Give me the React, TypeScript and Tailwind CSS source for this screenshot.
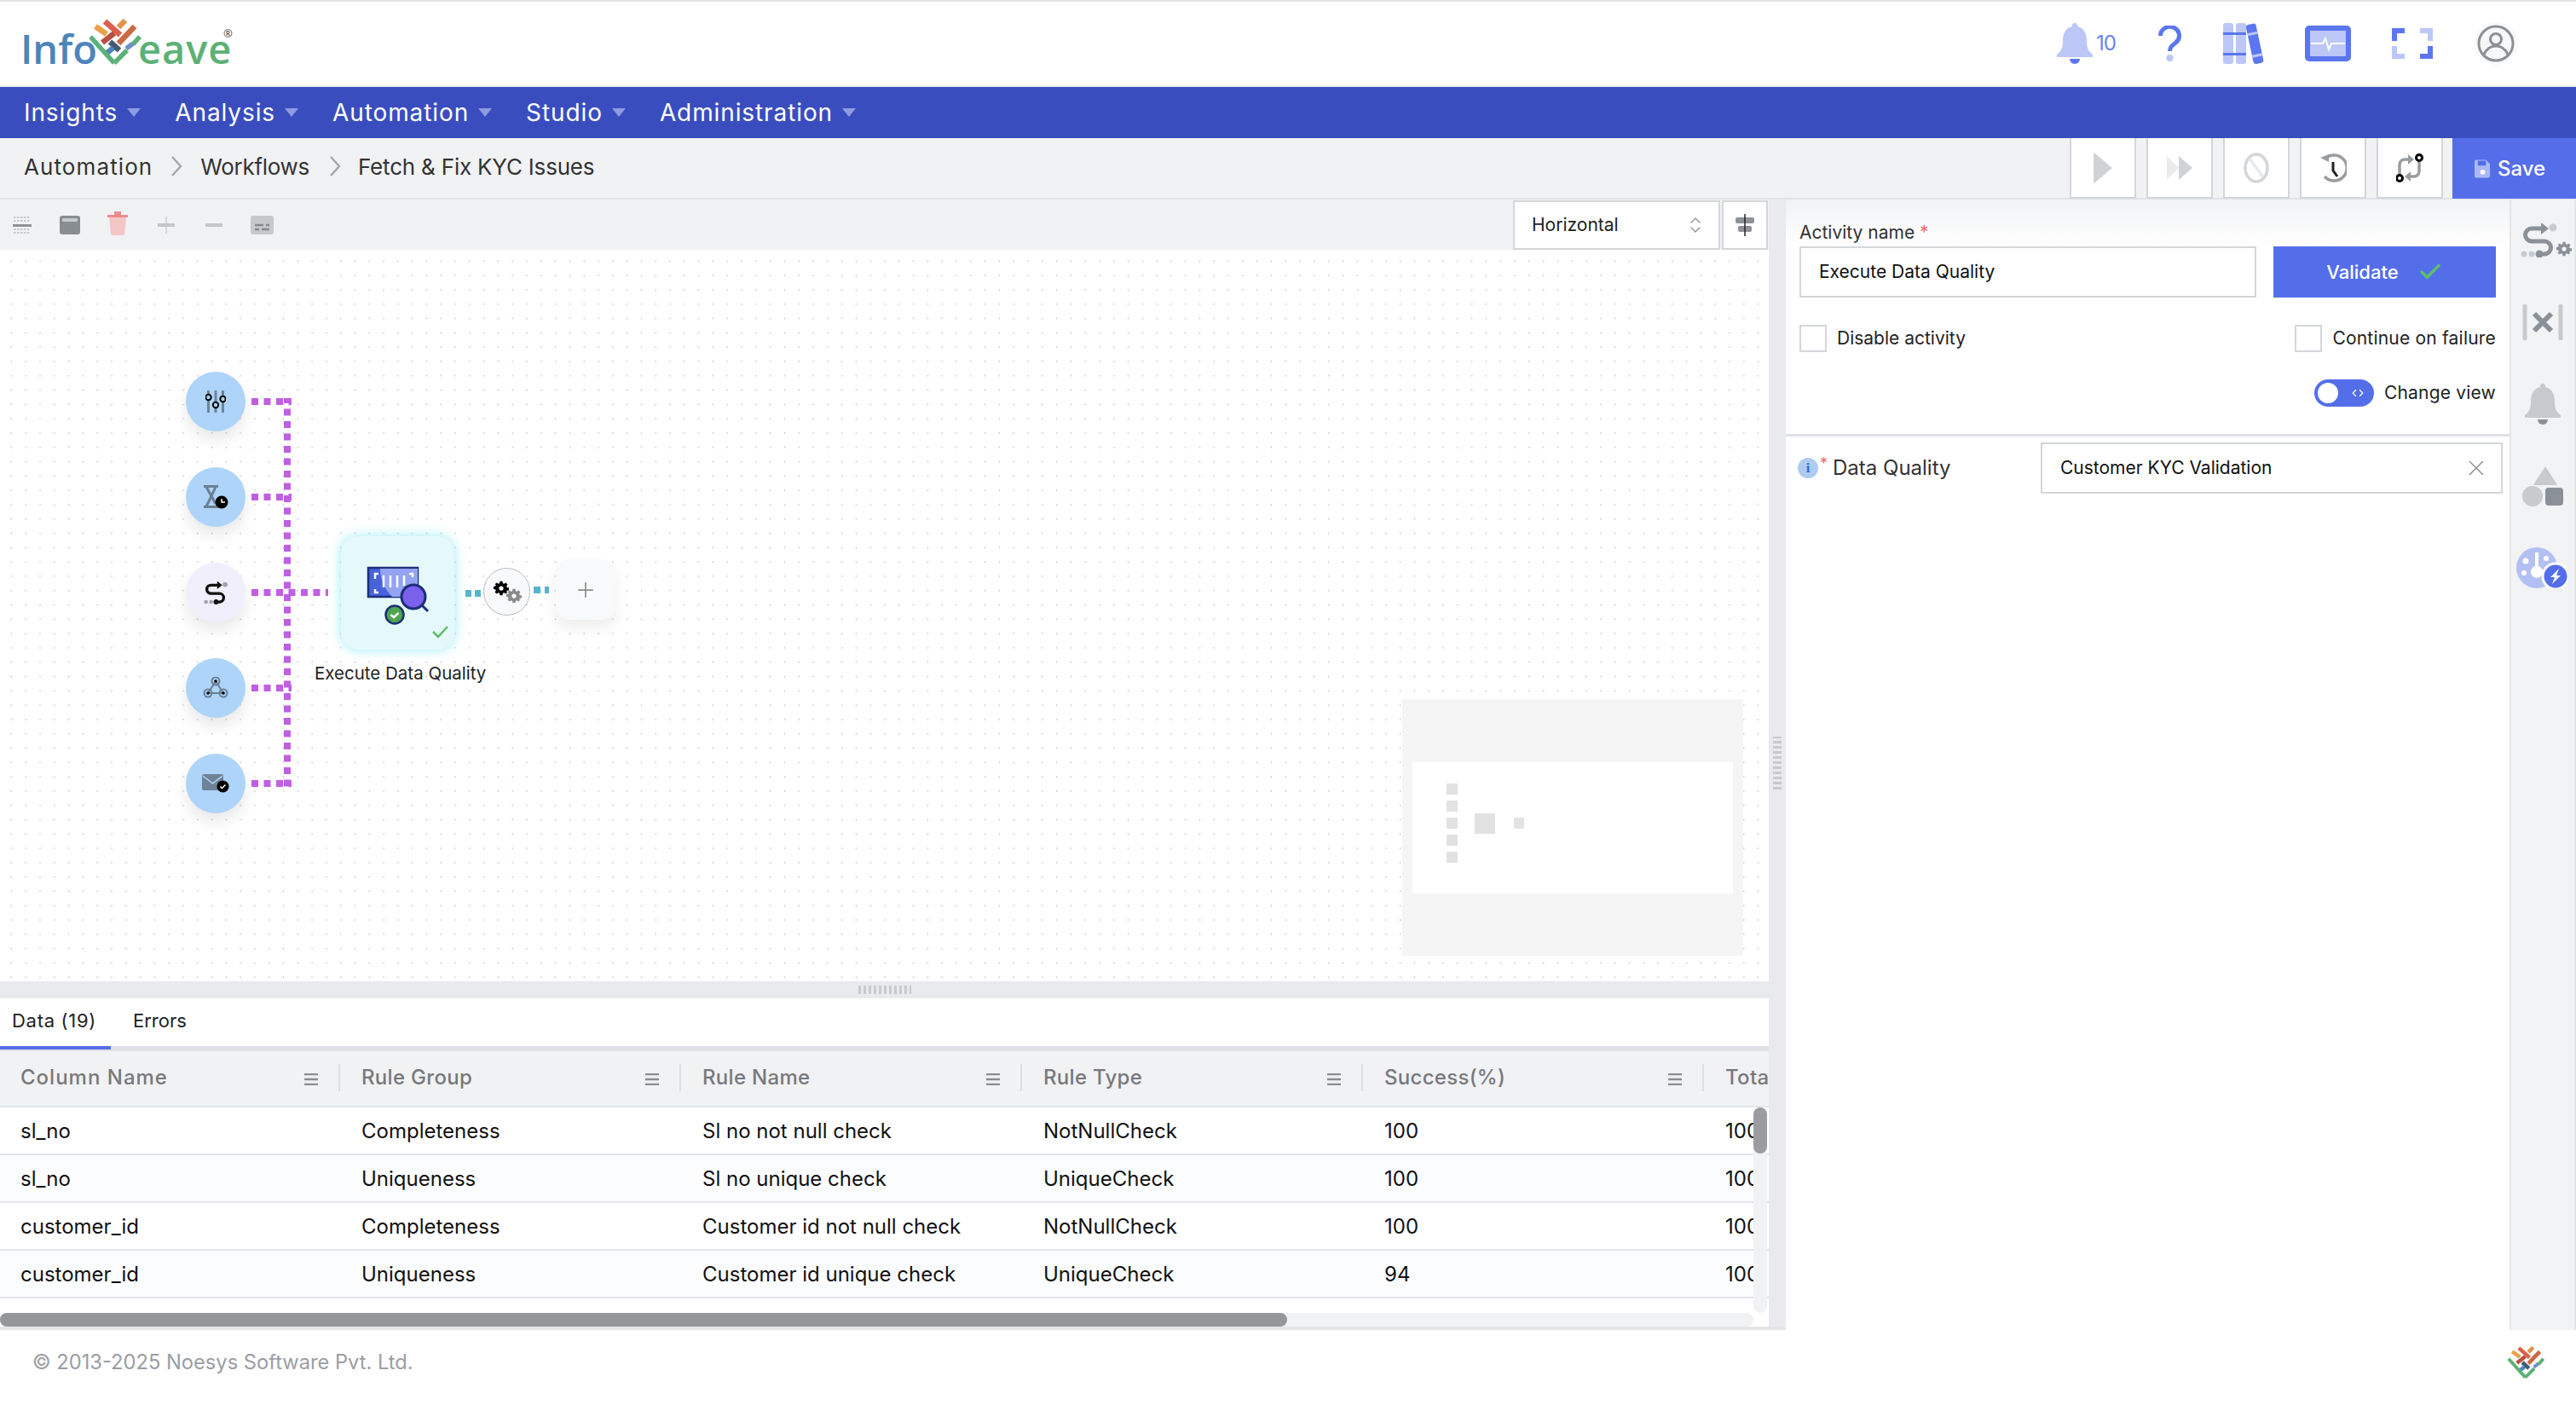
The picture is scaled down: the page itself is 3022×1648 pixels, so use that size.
import React from "react";
import { Plus, X, ChevronsUpDown, Code, Check } from "lucide-react";

const navItems = ["Insights", "Analysis", "Automation", "Studio", "Administration"];

const columns = ["Column Name", "Rule Group", "Rule Name", "Rule Type", "Success(%)", "Total"];

const rows = [
  ["sl_no", "Completeness", "Sl no not null check", "NotNullCheck", "100", "100"],
  ["sl_no", "Uniqueness", "Sl no unique check", "UniqueCheck", "100", "100"],
  ["customer_id", "Completeness", "Customer id not null check", "NotNullCheck", "100", "100"],
  ["customer_id", "Uniqueness", "Customer id unique check", "UniqueCheck", "94", "100"],
];

function WeaveMark({ className }: { className?: string }) {
  return (
    <svg viewBox="104 23 62 54" className={className}>
      <g fill="none" strokeWidth="6.5">
        <path d="M111 32L124 41" stroke="#e9a24a" />
        <path d="M122 26L140 42" stroke="#dc5f4d" />
        <path d="M138 33L146 25" stroke="#e0934a" />
        <path d="M138 52L157 32" stroke="#c96b42" />
        <path d="M119 51L133 40" stroke="#b9503f" />
        <path d="M128 50L139 60" stroke="#465a70" />
        <path d="M122 65L132 57" stroke="#4e86ba" />
        <path d="M147 58L155 52" stroke="#6f8ec9" strokeWidth="5.500" />
        <path d="M105 44L133 75" stroke="#5cb176" strokeWidth="5.500" />
        <path d="M133 75L148 60" stroke="#5cb176" strokeWidth="5.500" />
        <path d="M155 53L163 44" stroke="#5cb176" strokeWidth="5.500" />
      </g>
    </svg>
  );
}

function BellIcon({ body, clapper, className }: { body: string; clapper: string; className?: string }) {
  return (
    <svg viewBox="0 0 42 48" className={className}>
      <path
        d="M21 0a3 3 0 0 1 3 4c9 2 11 10 11 18 0 8 3 12 7 15a1.6 1.6 0 0 1-1 3H1a1.6 1.6 0 0 1-1-3c4-3 7-7 7-15 0-8 2-16 11-18a3 3 0 0 1 3-4z"
        fill={body}
      />
      <path d="M15 42h12a6 6 0 0 1-12 0z" fill={clapper} />
    </svg>
  );
}

function RouteIcon({ main, soft, className }: { main: string; soft: string; className?: string }) {
  return (
    <svg viewBox="0 0 44 40" className={className} fill="none">
      <path d="M26 6H13a7.500 7.500 0 0 0 0 15h15a7.500 7.500 0 0 1 0 15h-6" stroke={main} strokeWidth="5" />
      <path d="M24 -1l9 7-9 7z" fill={main} />
      <circle cx="22" cy="36" r="4.500" fill={main} />
      <circle cx="38" cy="5" r="4.500" fill={soft} />
      <circle cx="4" cy="36" r="3.500" fill={soft} />
      <circle cx="13" cy="36" r="3.500" fill={soft} />
    </svg>
  );
}

function GearIcon({ color, className }: { color: string; className?: string }) {
  return (
    <svg viewBox="0 0 24 24" className={className}>
      <path
        fill={color}
        fillRule="evenodd"
        d="M10 1h4l.6 3.2 1.9.8L19.2 3.2 22 6l-1.8 2.7.8 1.9 3 .6v4l-3 .6-.8 1.9L22 18l-2.8 2.8-2.7-1.8-1.9.8L14 23h-4l-.6-3.2-1.9-.8-2.7 1.8L2 18l1.8-2.2-.8-1.9-3-.6v-4l3-.6.8-1.9L2 6l2.8-2.8L7.500 5l1.9-.8zM12 8.500a3.500 3.500 0 1 0 0 7 3.500 3.500 0 0 0 0-7z"
      />
    </svg>
  );
}

function Crumb() {
  return (
    <svg viewBox="0 0 13 24" className="w-[13px] h-[24px] shrink-0" fill="none">
      <path d="M1 1l10 11L1 23" stroke="#a4a6a9" strokeWidth="2.400" />
    </svg>
  );
}

function ColumnMenu() {
  return (
    <svg viewBox="0 0 16 14" className="w-[16px] h-[14px] shrink-0 mt-[3px]">
      <path d="M0 1h16M0 7h16M0 13h16" stroke="#8a8d90" strokeWidth="2.400" />
    </svg>
  );
}

function TopIcons() {
  return (
    <div className="flex items-center ml-auto pr-[69px]">
      <BellIcon body="#bcc7f7" clapper="#5b76f0" className="w-[42px] h-[48px]" />
      <span className="ml-[4px] text-[24px] text-[#6a83f0] w-[22px] tracking-[-1px]">10</span>
      <svg viewBox="0 0 27 42" className="ml-[51px] w-[27px] h-[42px]" fill="none">
        <path d="M2.500 12a11 10.500 0 1 1 18 8c-4 3-7 5-7 10" stroke="#5b76f0" strokeWidth="5" />
        <circle cx="13.500" cy="38" r="4" fill="#bcc7f7" />
      </svg>
      <svg viewBox="0 0 48 48" className="ml-[49px] w-[48px] h-[48px]">
        <rect x="0" width="12" height="48" rx="3" fill="#bcc7f7" />
        <rect x="15" width="12" height="48" rx="3" fill="#bcc7f7" />
        <path d="M0 11h27v3H0zM0 35h27v3H0z" fill="#5b76f0" />
        <g transform="rotate(-12 36 24)">
          <rect x="31" y="1" width="12" height="47" rx="3" fill="#5b76f0" />
          <path d="M31 11h12v3H31zM31 37h12v3H31z" fill="#bcc7f7" />
        </g>
      </svg>
      <svg viewBox="0 0 54 42" className="ml-[48px] w-[54px] h-[42px]">
        <rect width="54" height="42" rx="5" fill="#5b76f0" />
        <rect x="6" y="6" width="42" height="30" fill="#bcc7f7" />
        <path d="M7 21h14l3-6 4 13 3-7h16" stroke="#fff" strokeWidth="2" fill="none" />
      </svg>
      <svg viewBox="0 0 48 36" className="ml-[48px] w-[48px] h-[36px]" fill="none" strokeWidth="6">
        <path d="M15 3H3v12" stroke="#5b76f0" />
        <path d="M33 3h12v12" stroke="#bcc7f7" />
        <path d="M15 33H3V21" stroke="#bcc7f7" />
        <path d="M33 33h12V21" stroke="#5b76f0" />
      </svg>
      <svg viewBox="0 0 50 50" className="ml-[49px] w-[50px] h-[50px]" fill="none">
        <circle cx="25" cy="25" r="25" fill="#f7f8f9" />
        <circle cx="25" cy="25" r="20" stroke="#8b9095" strokeWidth="3" />
        <circle cx="25" cy="20" r="6.500" stroke="#8b9095" strokeWidth="3" />
        <path d="M11 38c3-7 8-10 14-10s11 3 14 10" stroke="#8b9095" strokeWidth="3" />
      </svg>
    </div>
  );
}

function ActionButtons() {
  const boxCls = "w-[78px] h-[71px] bg-white border-x-2 border-b-2 border-[#d3d6da] flex items-center justify-center";
  return (
    <div className="flex ml-auto items-start">
      <div className="flex gap-[12px] mr-[11px]">
        <div className={boxCls}>
          <svg viewBox="0 0 22 36" className="w-[22px] h-[36px]">
            <path d="M0 2a1 1 0 0 1 2-1l20 17L2 35a1 1 0 0 1-2-1z" fill="#cfd3d6" />
          </svg>
        </div>
        <div className={boxCls}>
          <svg viewBox="0 0 30 30" className="w-[30px] h-[30px]">
            <path d="M0 1l14 14L0 29z" fill="#e9ebed" />
            <path d="M14 1l16 14-16 14z" fill="#cfd3d6" />
          </svg>
        </div>
        <div className={boxCls}>
          <svg viewBox="0 0 30 36" className="w-[30px] h-[36px]" fill="none">
            <ellipse cx="15" cy="18" rx="13" ry="16" stroke="#d3d6d9" strokeWidth="3.500" />
            <path d="M7 7l16 22" stroke="#e6e8ea" strokeWidth="3.500" />
          </svg>
        </div>
        <div className={boxCls}>
          <svg viewBox="0 0 32 36" className="w-[32px] h-[36px]" fill="none">
            <path d="M7 7a15 15 0 1 1-1 21" stroke="#9a9da0" strokeWidth="3.500" />
            <path d="M1 6l10-4v9z" fill="#9a9da0" />
            <path d="M16 11v10l5 7" stroke="#222" strokeWidth="3" />
          </svg>
        </div>
        <div className={boxCls}>
          <svg viewBox="0 0 32 36" className="w-[32px] h-[36px]" fill="none">
            <path d="M4 26V14a6 6 0 0 1 6-6h6" stroke="#9a9da0" strokeWidth="3.500" />
            <path d="M14 2l7 6-7 6z" fill="#9a9da0" />
            <path d="M27 10v12a6 6 0 0 1-6 6h-6" stroke="#9a9da0" strokeWidth="3.500" />
            <path d="M17 22l-7 6 7 6z" fill="#9a9da0" />
            <circle cx="27" cy="6" r="3.500" fill="#fff" stroke="#000" strokeWidth="3" />
            <circle cx="4" cy="30" r="3.500" fill="#fff" stroke="#000" strokeWidth="3" />
          </svg>
        </div>
      </div>
      <button className="w-[145px] h-[71px] bg-[#546eea] text-white flex items-center justify-center gap-[8px] pr-[10px] text-[24px] font-medium">
        <svg viewBox="0 0 20 24" className="w-[19px] h-[24px]">
          <path d="M2 1h12l5 5v15a2 2 0 0 1-2 2H2a2 2 0 0 1-2-2V3a2 2 0 0 1 2-2z" fill="#aab8f5" />
          <rect x="4" y="2" width="10" height="6" fill="#546eea" />
          <circle cx="10" cy="16" r="3" fill="#fff" />
        </svg>
        Save
      </button>
    </div>
  );
}

function CanvasToolbar() {
  return (
    <div className="h-[59px] shrink-0 bg-[#f1f2f4] flex items-center relative pl-[15px]">
      <svg viewBox="0 0 22 22" className="w-[22px] h-[22px]">
        <path d="M1 2h20M1 6h20M1 16h20M1 20h20" stroke="#c6c9cc" strokeWidth="2" strokeDasharray="2.500 1.500" />
        <rect y="10" width="22" height="3" fill="#8e9296" />
      </svg>
      <svg viewBox="0 0 24 22" className="ml-[33px] w-[24px] h-[22px]">
        <rect width="24" height="22" rx="3" fill="#888d92" />
        <rect x="3" y="3" width="18" height="4" rx="1" fill="#c6c9cc" />
      </svg>
      <svg viewBox="0 0 26 30" className="ml-[31px] w-[26px] h-[30px] -mt-[6px]">
        <path d="M1 6h24v3H1z" fill="#ef8c8c" />
        <path d="M9 2h8v4H9z" fill="#ef8c8c" />
        <path d="M3 9h20l-2 19a2 2 0 0 1-2 2H7a2 2 0 0 1-2-2z" fill="#f5c6c6" />
      </svg>
      <svg viewBox="0 0 20 20" className="ml-[34px] w-[20px] h-[20px]">
        <path d="M10 0v20" stroke="#d3d6d9" strokeWidth="2" />
        <path d="M0 10h20" stroke="#c3c7ca" strokeWidth="4" />
      </svg>
      <svg viewBox="0 0 20 4" className="ml-[36px] w-[20px] h-[4px]">
        <rect width="20" height="4" fill="#c3c7ca" />
      </svg>
      <svg viewBox="0 0 27 22" className="ml-[33px] w-[27px] h-[22px]">
        <rect width="27" height="22" rx="3" fill="#c6c9cc" />
        <path d="M5 11h10M18 11h4M5 16h5M13 16h9" stroke="#85898d" strokeWidth="2.500" />
      </svg>
      <div className="ml-auto flex items-stretch h-[59px] self-start pt-[1px] pr-[1px]">
        <div className="w-[243px] bg-white border-2 border-[#d3d6da] flex items-center justify-between pl-[20px] pr-[15px] text-[21px] text-[#222]">
          Horizontal
          <ChevronsUpDown className="w-[24px] h-[24px] text-[#8a8d90]" strokeWidth={1.2} />
        </div>
        <div className="ml-[2px] w-[54px] bg-white border-2 border-[#d3d6da] flex items-center justify-center">
          <svg viewBox="0 0 22 26" className="w-[22px] h-[26px]">
            <rect y="4" width="22" height="7" rx="2" fill="#8e9296" />
            <rect x="3" y="14" width="16" height="7" rx="2" fill="#8e9296" />
            <path d="M11 0v26" stroke="#222" strokeWidth="1.500" />
          </svg>
        </div>
      </div>
    </div>
  );
}

function Node({ top, soft, children }: { top: number; soft?: boolean; children: React.ReactNode }) {
  return (
    <div
      className={`absolute left-[218px] w-[70px] h-[70px] rounded-full flex items-center justify-center shadow-[0_10px_18px_rgba(0,0,0,0.09)] ${soft ? "bg-[#f1effc]" : "bg-[#aed4fa]"}`}
      style={{ top }}
    >
      {children}
    </div>
  );
}

function WorkflowCanvas() {
  return (
    <div className="h-[858px] shrink-0 relative overflow-hidden bg-white bg-[radial-gradient(#b5b5b5_0.6px,transparent_1.1px)] bg-[size:16.8px_16.8px] bg-[position:5px_5px]">
      {/* connectors live in page coordinates minus the canvas offset */}
      <svg className="absolute left-0 top-0 w-[800px] h-[800px]" fill="none">
        <g stroke="#c05fe2" strokeWidth="8" strokeDasharray="8 6.500">
          <path d="M295 178H342" />
          <path d="M295 290H342" />
          <path d="M295 402H385" />
          <path d="M295 514H342" />
          <path d="M295 626H342" />
          <path d="M337 174V630" strokeDashoffset="2" />
        </g>
        <path d="M546 403H566" stroke="#55b5cf" strokeWidth="8" strokeDasharray="7 4" />
        <path d="M626 399H644" stroke="#55b5cf" strokeWidth="8" strokeDasharray="8 5" />
      </svg>

      <Node top={143}>
        <svg viewBox="0 0 24 26" className="w-[24px] h-[26px]" fill="none">
          <path d="M3.500 0v26M12 0v26M20.500 0v26" stroke="#6f8296" strokeWidth="3" />
          <circle cx="3.500" cy="8" r="3.200" fill="#aed4fa" stroke="#000" strokeWidth="2" />
          <circle cx="12" cy="17" r="3.200" fill="#aed4fa" stroke="#000" strokeWidth="2" />
          <circle cx="20.500" cy="10" r="3.200" fill="#aed4fa" stroke="#000" strokeWidth="2" />
        </svg>
      </Node>
      <Node top={255}>
        <svg viewBox="0 0 30 28" className="w-[30px] h-[28px]" fill="none">
          <path d="M1 1.500h17M1 25.500h17M4 2l6 11-6 12M15 2l-5 11 5 9" stroke="#6a7f95" strokeWidth="3" />
          <circle cx="22" cy="20" r="7.500" fill="#000" />
          <path d="M22 16v4h4" stroke="#fff" strokeWidth="1.500" />
        </svg>
      </Node>
      <Node top={367} soft>
        <RouteIcon main="#111" soft="#a3a3ad" className="w-[29px] h-[27px]" />
      </Node>
      <Node top={479}>
        <svg viewBox="0 0 30 26" className="w-[30px] h-[26px]" fill="none">
          <path d="M15 5l-9 14h18z" stroke="#6a7f95" strokeWidth="2" />
          <circle cx="15" cy="5" r="4.500" stroke="#6a7f95" strokeWidth="2" />
          <circle cx="6" cy="19" r="4.500" stroke="#6a7f95" strokeWidth="2" />
          <circle cx="24" cy="19" r="4.500" stroke="#6a7f95" strokeWidth="2" />
          <circle cx="15" cy="5" r="1.800" fill="#000" />
          <circle cx="6" cy="19" r="1.800" fill="#000" />
          <circle cx="24" cy="19" r="1.800" fill="#000" />
        </svg>
      </Node>
      <Node top={591}>
        <svg viewBox="0 0 32 22" className="w-[32px] h-[22px]">
          <rect y="0" width="25" height="19" rx="2" fill="#6f8296" />
          <path d="M1 2l11.500 9L24 2" stroke="#aed4fa" strokeWidth="1.500" fill="none" />
          <circle cx="24.500" cy="14.500" r="7" fill="#000" />
          <path d="M21.500 14.500l2 2 4-4" stroke="#fff" strokeWidth="1.500" fill="none" />
        </svg>
      </Node>

      <div className="absolute left-[400px] top-[336px] w-[133px] h-[133px] rounded-[20px] bg-[#e5f9fb] shadow-[0_0_14px_rgba(130,232,244,0.8)]">
        <svg viewBox="0 0 133 133" className="w-[133px] h-[133px]" fill="none">
          <rect x="32" y="37" width="58" height="34" fill="#4763dc" stroke="#1c2f78" strokeWidth="2.500" />
          <path d="M46 38h44v33H60c-8-8-14-20-14-33z" fill="#94a3f2" />
          <path d="M44 44h-4v6M80 44h4v4M40 62v4h4M50 46v14M58 46v14M66 46v14M74 46v12" stroke="#fff" strokeWidth="2.500" />
          <circle cx="85" cy="71" r="14" fill="#7a60ea" stroke="#1c2f78" strokeWidth="3" />
          <path d="M95 81l7 7" stroke="#1c2f78" strokeWidth="3" />
          <circle cx="63" cy="92" r="10.500" fill="#4ea64f" stroke="#1c2f78" strokeWidth="2.500" />
          <path d="M58.500 92l3.500 3 5.500-5" stroke="#fff" strokeWidth="2.500" />
          <path d="M108 112l6 6 11-12" stroke="#5bbd60" strokeWidth="2.500" />
        </svg>
      </div>
      <div className="absolute left-[369px] top-[483px] text-[20.500px] leading-[28px] text-[#222] whitespace-nowrap">
        Execute Data Quality
      </div>

      <div className="absolute left-[567px] top-[373px] w-[55px] h-[56px] rounded-full bg-[#f8f9fa] border border-[#b9bcc0]">
        <GearIcon color="#000" className="absolute left-[11px] top-[14px] w-[18px] h-[18px]" />
        <GearIcon color="#8a8a8a" className="absolute left-[26px] top-[23px] w-[18px] h-[18px]" />
      </div>

      <div className="absolute left-[652px] top-[363px] w-[70px] h-[71px] rounded-[16px] bg-[#f9fafb] shadow-[0_10px_18px_rgba(0,0,0,0.07)] flex items-center justify-center">
        <Plus className="w-[28px] h-[28px] text-[#8d8d8d]" strokeWidth={1.5} />
      </div>

      {/* minimap */}
      <div className="absolute left-[1645px] top-[527px] w-[400px] h-[301px] bg-[#f5f5f5] flex items-center">
        <div className="relative w-[376px] h-[154px] ml-[12px] bg-white">
          <div className="absolute left-[40px] top-[25px] flex flex-col gap-[7px]">
            <div className="w-[13px] h-[13px] bg-[#e2e2e2]" />
            <div className="w-[13px] h-[13px] bg-[#e2e2e2]" />
            <div className="w-[13px] h-[13px] bg-[#e2e2e2]" />
            <div className="w-[13px] h-[13px] bg-[#e2e2e2]" />
            <div className="w-[13px] h-[13px] bg-[#e2e2e2]" />
          </div>
          <div className="absolute left-[73px] top-[60px] w-[24px] h-[24px] bg-[#e2e2e2]" />
          <div className="absolute left-[119px] top-[65px] w-[12px] h-[13px] bg-[#e2e2e2]" />
        </div>
      </div>
    </div>
  );
}

function DataTable() {
  return (
    <div className="relative flex-1 min-h-0 overflow-hidden">
      <div className="flex h-[66px] bg-[#f1f2f4] border-b-2 border-[#e3e5e8]">
        {columns.map((c) => (
          <div
            key={c}
            className={`w-[400px] shrink-0 flex items-center pl-[24px] pb-[2px] text-[24px] font-medium text-[#77797c] whitespace-nowrap ${c === "Column Name" ? "tracking-[1px]" : "tracking-[0.3px]"}`}
          >
            <span>{c}</span>
            {c !== "Total" && (
              <div className="ml-auto flex items-center">
                <ColumnMenu />
                <div className="ml-[24px] w-[2px] h-[32px] bg-[#dcdfe3]" />
                <div className="w-[1px]" />
              </div>
            )}
          </div>
        ))}
      </div>
      {rows.map((r, i) => (
        <div key={i} className={`flex h-[56px] border-b-2 border-[#e3e5e8] ${i % 2 ? "bg-[#fbfcfe]" : "bg-white"}`}>
          {r.map((cell, j) => (
            <div key={j} className="w-[400px] shrink-0 flex items-center pl-[24px] pt-[2px] text-[24px] text-[#111] whitespace-nowrap">
              {cell}
            </div>
          ))}
        </div>
      ))}
      {/* scrollbars */}
      <div className="absolute right-[2px] top-[66px] w-[16px] h-[241px] rounded-full bg-[#f1f2f3]">
        <div className="w-[16px] h-[54px] rounded-[8px] bg-[#9a9c9f]" />
      </div>
      <div className="absolute left-0 top-[307px] w-[2057px] h-[16px] rounded-full bg-[#f1f2f3]">
        <div className="w-[1510px] h-[16px] rounded-full bg-[#94969a]" />
      </div>
    </div>
  );
}

function PropertiesPanel() {
  return (
    <div className="flex-1 bg-white flex flex-col min-w-0">
      <div className="h-[278px] bg-gradient-to-b from-[#f1f2f4] to-white to-[20%] border-b-[3px] border-[#dfe1e5] pl-[16px] pr-[16px] pt-[25px]">
        <div className="text-[21px] leading-[28px] text-[#333]">
          Activity name <span className="text-[#ef6a6a]">*</span>
        </div>
        <div className="flex mt-[2px]">
          <div className="w-[536px] h-[60px] bg-white border-2 border-[#d3d6da] flex items-center pl-[21px] text-[21px] text-[#111]">
            Execute Data Quality
          </div>
          <button className="ml-[20px] w-[261px] h-[60px] bg-[#546eea] text-white flex items-center justify-center gap-[22px] text-[22px] font-medium">
            Validate
            <Check className="w-[30px] h-[30px] text-[#5cc06a]" strokeWidth={2.8} />
          </button>
        </div>
        <div className="flex items-center w-[817px] mt-[32px] text-[21px] text-[#222]">
          <div className="w-[32px] h-[32px] bg-white border-2 border-[#d3d6da]" />
          <span className="ml-[12px]">Disable activity</span>
          <div className="ml-auto w-[32px] h-[32px] bg-white border-2 border-[#d3d6da]" />
          <span className="ml-[12px] tracking-[0.2px]">Continue on failure</span>
        </div>
        <div className="flex items-center justify-end w-[817px] mt-[32px] text-[21px] text-[#222]">
          <div className="relative w-[70px] h-[32px] rounded-full bg-[#546eea]">
            <div className="absolute left-[4px] top-[4px] w-[24px] h-[24px] rounded-full bg-white" />
            <Code className="absolute left-[44px] top-[9px] w-[14px] h-[14px] text-white" strokeWidth={2} />
          </div>
          <span className="ml-[12px] tracking-[0.2px]">Change view</span>
        </div>
      </div>
      <div className="flex items-center pl-[14px] pr-[8px] pt-[7px] text-[24px] text-[#333]">
        <div className="w-[24px] h-[24px] rounded-full bg-[#aecbf2] flex items-center justify-center text-[15px] font-bold text-[#2f67c4] font-serif">i</div>
        <span className="text-[#ef6a6a] ml-[2px] mb-[10px] leading-[16px] text-[18px]">*</span>
        <span className="ml-[6px]">Data Quality</span>
        <div className="ml-auto w-[542px] h-[60px] bg-white border-2 border-[#d3d6da] flex items-center pl-[21px] pr-[14px] text-[21px] text-[#111]">
          Customer KYC Validation
          <X className="ml-auto w-[30px] h-[30px] text-[#8a8d90]" strokeWidth={1.1} />
        </div>
      </div>
    </div>
  );
}

function RightRail() {
  return (
    <div className="w-[78px] shrink-0 bg-[#f2f3f5] border-x-2 border-[#e3e5e8] flex flex-col items-center pt-[28px]">
      <div className="relative w-[60px] h-[40px] ml-[8px]">
        <RouteIcon main="#8b9198" soft="#c8cbce" className="absolute left-0 top-0 w-[44px] h-[40px]" />
        <GearIcon color="#8b9198" className="absolute left-[42px] top-[21px] w-[18px] h-[18px]" />
      </div>
      <svg viewBox="0 0 48 42" className="mt-[55px] w-[48px] h-[42px]" fill="none">
        <path d="M3 2v38M45 2v38" stroke="#c8cbce" strokeWidth="5" strokeLinecap="round" />
        <path d="M14 11l20 20M34 11L14 31" stroke="#8b9198" strokeWidth="6" />
      </svg>
      <BellIcon body="#c6c9ce" clapper="#8b9198" className="mt-[51px] w-[42px] h-[48px]" />
      <svg viewBox="0 0 48 48" className="mt-[48px] w-[48px] h-[48px]">
        <path d="M27 1l13 20a1 1 0 0 1-1 2H15a1 1 0 0 1-1-2z" fill="#c8cbce" />
        <circle cx="12" cy="36" r="12" fill="#c8cbce" />
        <rect x="27" y="26" width="21" height="21" rx="4" fill="#8b9198" />
      </svg>
      <svg viewBox="0 0 60 48" className="mt-[48px] w-[60px] h-[48px] -ml-[2px]">
        <circle cx="24" cy="24" r="24" fill="#b3c0f3" />
        <path d="M22 6h4v16a7 7 0 1 1-4 0z" fill="#fff" />
        <circle cx="11" cy="16" r="3.500" fill="#fff" />
        <circle cx="35" cy="13" r="3" fill="#fff" />
        <circle cx="9" cy="30" r="3" fill="#fff" />
        <circle cx="46" cy="34" r="15" fill="#546eea" stroke="#fff" strokeWidth="3" />
        <path d="M50 25l-10 10h5l-3 8 10-10h-5z" fill="#fff" />
      </svg>
    </div>
  );
}

export default function App() {
  return (
    <div className="w-full h-screen flex flex-col overflow-hidden bg-white font-[Inter,sans-serif]">
      {/* Top header */}
      <header className="h-[102px] shrink-0 flex items-center border-t-2 border-t-[#e4e4e4] border-b-2 border-b-[#eceef2] bg-white">
        <div className="relative flex items-end ml-[24px] h-[74px] font-['Open_Sans',sans-serif] font-semibold">
          <span className="text-[47px] leading-[58px] text-[#4d84bb] mb-[2px]">Info</span>
          <WeaveMark className="absolute left-[81px] top-[8px] w-[62px] h-[54px]" />
          <span className="ml-[48px] text-[47px] leading-[58px] tracking-[1px] text-[#5cb176] mb-[2px]">eave</span>
          <span className="absolute left-[238px] top-[16px] text-[13px] text-[#555]">®</span>
        </div>
        <TopIcons />
      </header>

      {/* Main nav */}
      <nav className="h-[60px] shrink-0 bg-[#3a4dbf] flex items-center pl-[28px] gap-[39px]">
        {navItems.map((n) => (
          <div key={n} className="flex items-center text-white text-[28px] tracking-[0.9px] gap-[10px]">
            {n}
            <svg viewBox="0 0 18 12" className="w-[18px] h-[12px]">
              <path d="M1 1h16L9 11z" fill="#8e9be0" />
            </svg>
          </div>
        ))}
      </nav>

      {/* Breadcrumb and actions */}
      <div className="h-[72px] shrink-0 bg-[#f1f2f4] border-b-2 border-[#e1e3e7] flex items-start">
        <div className="h-[70px] flex items-center pl-[28px] pb-[4px] text-[26px] text-[#333]">
          <span className="tracking-[1.1px]">Automation</span>
          <div className="ml-[22px] mr-[21px]"><Crumb /></div>
          <span className="tracking-[-0.3px]">Workflows</span>
          <div className="ml-[24px] mr-[20px]"><Crumb /></div>
          <span className="tracking-[-0.2px]">Fetch &amp; Fix KYC Issues</span>
        </div>
        <ActionButtons />
      </div>

      {/* Work area */}
      <div className="flex-1 min-h-0 flex">
        <div className="w-[2075px] shrink-0 flex flex-col border-b-[4px] border-[#e3e5e8]">
          <CanvasToolbar />
          <WorkflowCanvas />
          <div className="h-[20px] shrink-0 bg-[#e9eaee] flex items-center justify-center">
            <div className="w-[62px] h-[10px] bg-[repeating-linear-gradient(90deg,#c8cacd_0_3px,transparent_3px_6px)]" />
          </div>
          <div className="h-[62px] shrink-0 bg-white border-b-[6px] border-[#dfe1e6] flex items-end relative text-[22px] text-[#222]">
            <div className="w-[130px] h-[60px] -mb-[4px] border-b-[4px] border-[#546eea] flex items-center pl-[14px] pb-[4px] tracking-[0.7px] relative">Data (19)</div>
            <div className="h-[56px] flex items-center pl-[26px] pb-[4px]">Errors</div>
          </div>
          <DataTable />
        </div>
        <div className="w-[20px] shrink-0 bg-[#e9eaee] flex items-center justify-center border-b-[4px] border-[#e3e5e8]">
          <div className="w-[10px] h-[62px] bg-[repeating-linear-gradient(0deg,#c8cacd_0_3px,transparent_3px_6px)]" />
        </div>
        <PropertiesPanel />
        <RightRail />
      </div>

      {/* Footer */}
      <footer className="h-[88px] shrink-0 bg-white flex items-center pl-[38px] pr-[36px] pb-[12px] text-[23.700px] text-[#9a9da3]">
        © 2013-2025 Noesys Software Pvt. Ltd.
        <WeaveMark className="ml-auto w-[44px] h-[38px]" />
      </footer>
    </div>
  );
}
